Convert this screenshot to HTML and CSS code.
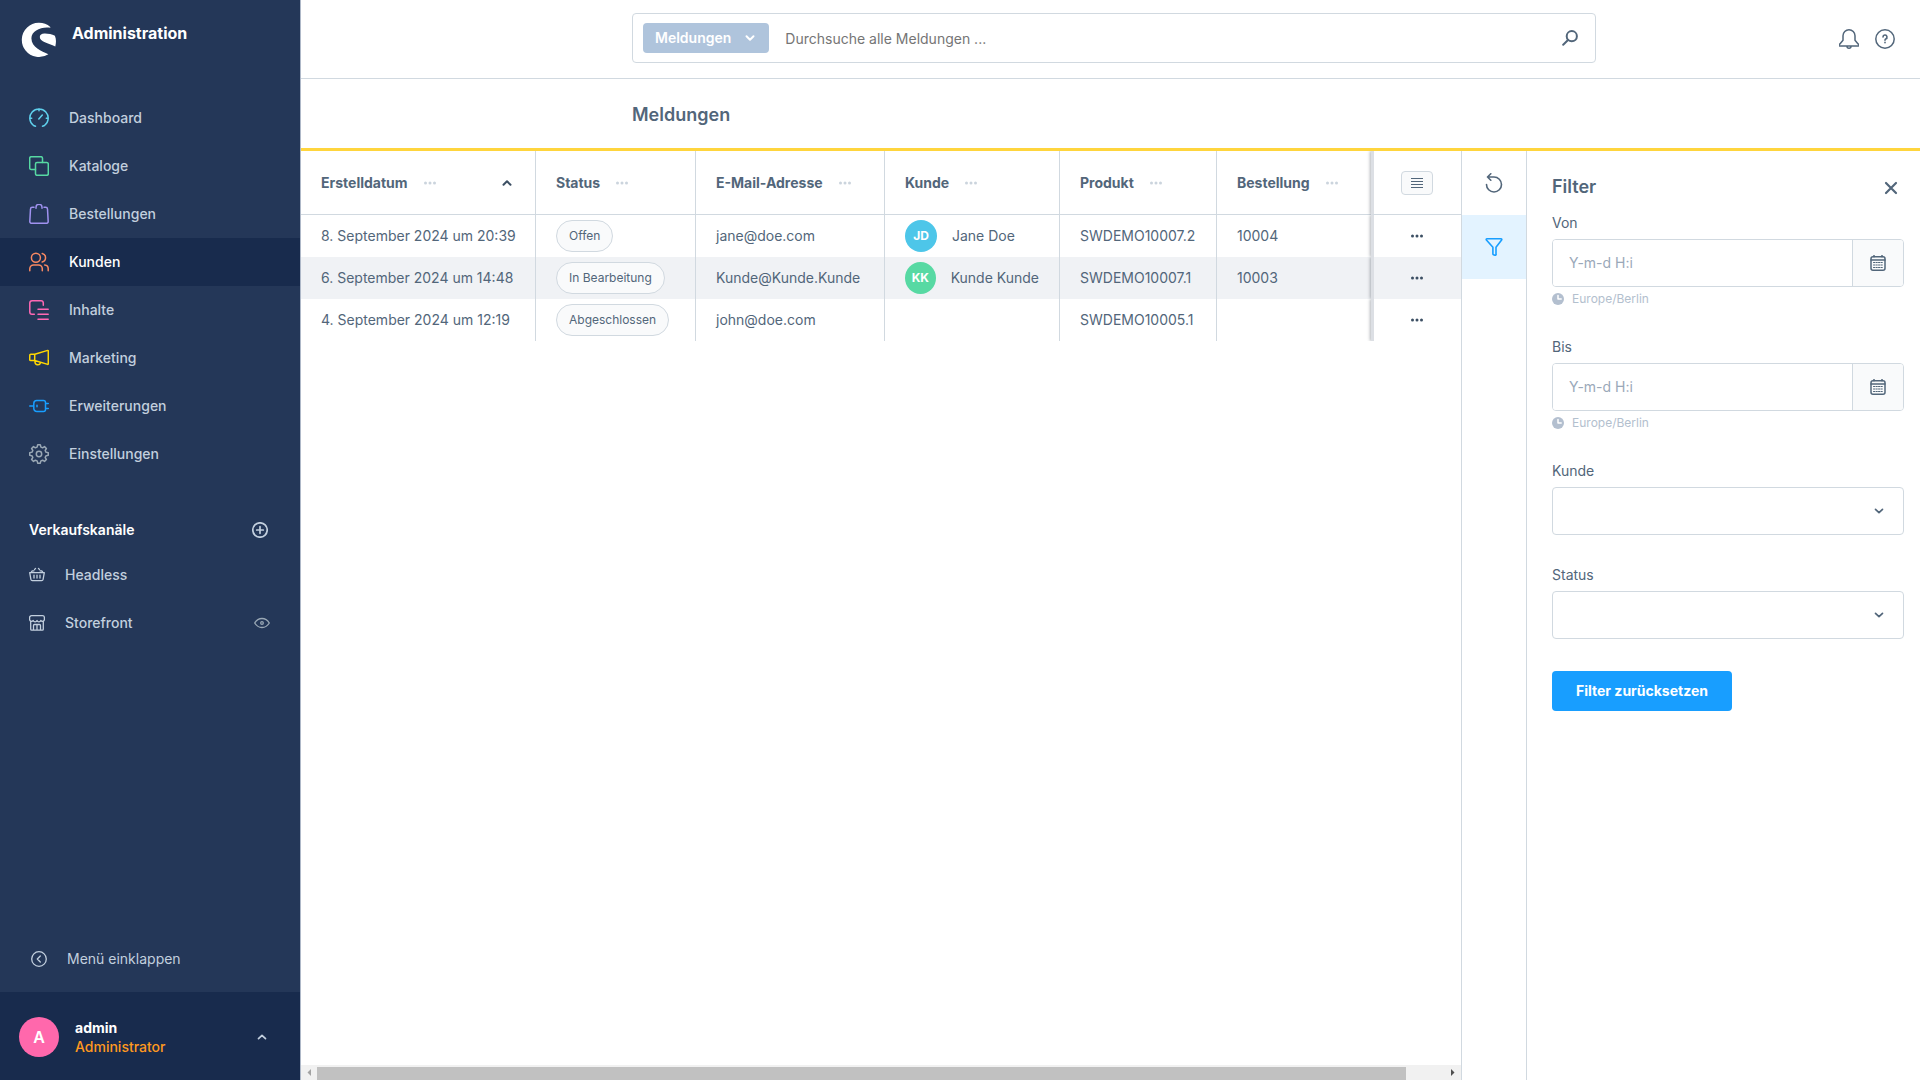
FILE: index.html
```html
<!DOCTYPE html>
<html lang="de">
<head>
<meta charset="utf-8">
<meta name="viewport" content="width=device-width, initial-scale=1">
<title>Meldungen | Administration</title>
<link rel="stylesheet" href="styles.css">
</head>
<body>
<svg class="sprite" aria-hidden="true">
  <symbol id="chevron-up" viewBox="0 0 10 10"><path d="M1.500 6.700 5 3.300l3.500 3.400"/></symbol>
  <symbol id="chevron-down" viewBox="0 0 10 10"><path d="M1.500 3.300 5 6.700l3.500-3.400"/></symbol>
  <symbol id="dots" viewBox="0 0 14 4"><circle cx="2.500" cy="2" r="1.500"/><circle cx="7" cy="2" r="1.500"/><circle cx="11.500" cy="2" r="1.500"/></symbol>
  <symbol id="calendar" viewBox="0 0 16 16"><rect x="1" y="1.700" width="14" height="13.500" rx="2"/><path d="M1 4.900h14M4 .2v1.500M12 .2v1.500"/><path d="M3.500 7.500h9M3.500 10h9M3.500 12.500h9" stroke-width="1" stroke-dasharray="1.300 1.200"/></symbol>
  <symbol id="clock" viewBox="0 0 12 12"><circle cx="6" cy="6" r="6"/><path d="M6 2.500V6h3.200" fill="none" stroke="#fff"/></symbol>
</svg>

<div class="app">
  <aside class="sidebar">
    <header class="brand">
      <svg class="brand-logo" viewBox="0 0 36 36" aria-hidden="true"><path d="M29.300 4.900A17.200 17.200 0 1 0 27.400 32.300C20.500 28.900 10.500 25.500 10.400 16.200 10.400 9.500 18 5.600 26 5.400c1.300 0 2.200.1 3.300.4ZM34.300 24.400c.9-3.800 1-7.300-.4-10.600-3-1.700-7.300-2.400-10.500-2.300-2.800.1-4.600 1.400-4.600 3.500 0 4.900 8.500 6.200 15.500 9.400Z"/></svg>
      <span class="brand-name">Administration</span>
    </header>

    <nav class="menu" aria-label="Hauptmenü">
      <a class="menu-item" href="#"><svg class="icon c-cyan" viewBox="0 0 20 20"><path d="M6.500 18.300 4.500 17.500A9.200 9.200 0 1 1 15.500 17.500l-2 .8M10 .8v2M.9 10.300h1.800M17.300 10.300h1.800M9.800 11l3.500-4"/></svg>Dashboard</a>
      <a class="menu-item" href="#"><svg class="icon c-green" viewBox="0 0 20 20"><path d="M6.500 13.500H2.200A1.500 1.500 0 0 1 .7 12V2.200A1.500 1.500 0 0 1 2.200.7H12a1.500 1.500 0 0 1 1.500 1.500v4.300"/><rect x="6.500" y="6.500" width="12.800" height="12.800" rx="1.500"/></svg>Kataloge</a>
      <a class="menu-item" href="#"><svg class="icon c-violet" viewBox="0 0 20 20"><path d="M5 3.300H3.300A1.800 1.800 0 0 0 1.500 5L.8 17.500a1.700 1.700 0 0 0 1.700 1.800h15a1.700 1.700 0 0 0 1.700-1.800L18.500 5a1.800 1.800 0 0 0-1.800-1.700H15M7 4.300V3.300a3 3 0 0 1 6 0v1"/></svg>Bestellungen</a>
      <a class="menu-item is-active" href="#" aria-current="page"><svg class="icon c-orange" viewBox="0 0 20 20"><circle cx="6.900" cy="5.800" r="4.500"/><path d="M13.200 1.400a4.500 4.500 0 0 1 0 8.700M.8 18.700v-2a3.800 3.800 0 0 1 3.800-3.800h4.900a3.800 3.800 0 0 1 3.800 3.800v2M15.700 13a3.800 3.800 0 0 1 3.500 3.800v1.900"/></svg>Kunden</a>
      <a class="menu-item" href="#"><svg class="icon c-pink" viewBox="0 0 20 20"><path d="M5.300 14.300H3A2.300 2.300 0 0 1 .8 12V3A2.300 2.300 0 0 1 3 .8h9A2.300 2.300 0 0 1 14.300 3v2.300M9 9.300h10.200M9 14.300h10.200M9 19.200h10.200"/></svg>Inhalte</a>
      <a class="menu-item" href="#"><svg class="icon c-yellow" viewBox="0 0 20 20"><path d="M.8 7.300A1 1 0 0 1 1.800 6.300h4l12.900-3.900a.5.500 0 0 1 .6.500v13a.5.500 0 0 1-.6.500L5.700 12.500h-4a1 1 0 0 1-1-1ZM5.700 6.300v6.200M6 12.600v1.600a2.800 2.800 0 0 0 5.500.5"/></svg>Marketing</a>
      <a class="menu-item" href="#"><svg class="icon c-blue" viewBox="0 0 20 20"><path d="M.7 10h4.100M4.800 7.500a3 3 0 0 1 3-3h6.700a2 2 0 0 1 2 2v7a2 2 0 0 1-2 2H7.800a3 3 0 0 1-3-3ZM16.500 7.500h2.800M16.500 12.500h2.800M8 9.300v1.400"/></svg>Erweiterungen</a>
      <a class="menu-item" href="#"><svg class="icon c-gray" viewBox="0 0 20 20"><path d="m8.600 1 .3-.3h2.200l.3.300.5 2.100 1.700.7 1.900-1.200 1.900 1.900-1.200 1.900.7 1.700 2.400.7v2.400l-2.400.7-.7 1.700 1.200 1.900-1.900 1.900-1.900-1.200-1.700.7-.7 2.400H8.800l-.7-2.400-1.700-.7-1.900 1.200-1.900-1.900 1.200-1.900-.7-1.700-2.400-.7V8.800l2.400-.7.700-1.700-1.200-1.900 1.900-1.900 1.900 1.200 1.700-.7Z"/><circle cx="10" cy="10" r="2.700"/></svg>Einstellungen</a>
    </nav>

    <section class="channels">
      <div class="channels-head">
        <h2>Verkaufskanäle</h2>
        <button type="button" aria-label="Verkaufskanal hinzufügen"><svg class="icon-sm" viewBox="0 0 16 16"><circle cx="8" cy="8" r="7.200"/><path d="M8 4.700v6.600M4.700 8h6.600"/></svg></button>
      </div>
      <a class="channel" href="#"><svg class="icon-sm thin" viewBox="0 0 16 16"><path d="M.7 5.600h14.600l-1.200 6.800a1.500 1.500 0 0 1-1.500 1.200H3.400a1.500 1.500 0 0 1-1.500-1.200ZM2 5.600l1.200-1.700h1.600M14 5.600l-1.200-1.700h-1.600M5.500 2.600l1-1.200M10.500 2.600l-1-1.200M5 8.100v3M8 8.100v3M11 8.100v3"/></svg>Headless</a>
      <a class="channel" href="#"><svg class="icon-sm thin" viewBox="0 0 16 16"><path d="M1.700 6.500v7.700a1 1 0 0 0 1 1h10.600a1 1 0 0 0 1-1V6.500M2.500.7h11a1.900 1.900 0 0 1 1.900 1.900V4.500a2 2 0 0 1-3.600 1 2 2 0 0 1-3.800 0 2 2 0 0 1-3.800 0 2 2 0 0 1-3.600-1V2.600A1.900 1.900 0 0 1 2.500.7ZM4.500 15v-4.500a1 1 0 0 1 1-1h5a1 1 0 0 1 1 1V15M8 9.500V15"/></svg><span>Storefront</span><svg class="icon-sm thin eye" viewBox="0 0 16 16"><path d="M.7 8C2.500 5 5 3.500 8 3.500S13.500 5 15.300 8C13.500 11 11 12.500 8 12.500S2.500 11 .7 8Z"/><circle cx="8" cy="8" r="1.300"/></svg></a>
    </section>

    <button class="collapse" type="button"><svg class="icon-sm thin" viewBox="0 0 16 16"><circle cx="8" cy="8" r="7.300"/><path d="M9.300 5 6.300 8l3 3"/></svg>Menü einklappen</button>

    <button class="user" type="button">
      <span class="user-avatar">A</span>
      <span class="user-text"><strong>admin</strong><span>Administrator</span></span>
      <svg class="chevron" aria-hidden="true"><use href="#chevron-up"/></svg>
    </button>
  </aside>

  <div class="page">
    <header class="topbar">
      <form class="search" role="search">
        <button class="search-type" type="button">Meldungen<svg class="chevron" aria-hidden="true"><use href="#chevron-down"/></svg></button>
        <input type="search" aria-label="Suche" placeholder="Durchsuche alle Meldungen ...">
        <button class="search-go" type="submit" aria-label="Suchen"><svg viewBox="0 0 16 16"><circle cx="9.800" cy="6.200" r="5.100"/><path d="M6 10 1.200 14.800"/></svg></button>
      </form>
      <div class="topbar-actions">
        <button type="button" aria-label="Benachrichtigungen"><svg viewBox="0 0 20 20"><path d="M10 .8a6 6 0 0 0-6 6v4.400L.9 15a1 1 0 0 0 .3 2h17.600a1 1 0 0 0 .3-2L16 11.200V6.800a6 6 0 0 0-6-6ZM8 17.500a2 1.700 0 0 0 4 0"/></svg></button>
        <button type="button" aria-label="Hilfe"><svg viewBox="0 0 20 20"><circle cx="10" cy="10" r="9.200"/><path d="M8 8a2 2 0 1 1 2.700 1.900q-.7.300-.7 1.300M10 13.300v.5" stroke-width="1.600"/></svg></button>
      </div>
    </header>

    <div class="smartbar"><h1>Meldungen</h1></div>

    <div class="content">
      <main class="listing">
        <table class="grid">
          <colgroup><col class="w-date"><col class="w-status"><col class="w-mail"><col class="w-customer"><col class="w-product"><col><col class="w-actions"></colgroup>
          <thead>
            <tr>
              <th><div class="head">Erstelldatum<svg class="dots"><use href="#dots"/></svg><svg class="chevron sort"><use href="#chevron-up"/></svg></div></th>
              <th><div class="head">Status<svg class="dots"><use href="#dots"/></svg></div></th>
              <th><div class="head">E-Mail-Adresse<svg class="dots"><use href="#dots"/></svg></div></th>
              <th><div class="head">Kunde<svg class="dots"><use href="#dots"/></svg></div></th>
              <th><div class="head">Produkt<svg class="dots"><use href="#dots"/></svg></div></th>
              <th><div class="head">Bestellung<svg class="dots"><use href="#dots"/></svg></div></th>
              <th class="actions"><button class="grid-settings" type="button" aria-label="Spalten"><svg viewBox="0 0 12 12"><path d="M0 1.500h12M0 4.500h12M0 7.500h12M0 10.500h12"/></svg></button></th>
            </tr>
          </thead>
          <tbody>
            <tr>
              <td>8. September 2024 um 20:39</td>
              <td><span class="pill">Offen</span></td>
              <td>jane@doe.com</td>
              <td><div class="customer"><span class="avatar a-blue">JD</span>Jane Doe</div></td>
              <td>SWDEMO10007.2</td>
              <td>10004</td>
              <td class="actions"><button class="row-menu" type="button" aria-label="Aktionen"><svg class="dots"><use href="#dots"/></svg></button></td>
            </tr>
            <tr>
              <td>6. September 2024 um 14:48</td>
              <td><span class="pill">In Bearbeitung</span></td>
              <td>Kunde@Kunde.Kunde</td>
              <td><div class="customer"><span class="avatar a-green">KK</span>Kunde Kunde</div></td>
              <td>SWDEMO10007.1</td>
              <td>10003</td>
              <td class="actions"><button class="row-menu" type="button" aria-label="Aktionen"><svg class="dots"><use href="#dots"/></svg></button></td>
            </tr>
            <tr>
              <td>4. September 2024 um 12:19</td>
              <td><span class="pill">Abgeschlossen</span></td>
              <td>john@doe.com</td>
              <td></td>
              <td>SWDEMO10005.1</td>
              <td></td>
              <td class="actions"><button class="row-menu" type="button" aria-label="Aktionen"><svg class="dots"><use href="#dots"/></svg></button></td>
            </tr>
          </tbody>
        </table>
        <div class="scrollbar" aria-hidden="true">
          <svg class="arrow is-off" viewBox="0 0 15 15"><path d="M9.500 4v7L6 7.500Z"/></svg>
          <div class="track"><div class="thumb"></div></div>
          <svg class="arrow" viewBox="0 0 15 15"><path d="M5.500 4v7L9 7.500Z"/></svg>
        </div>
      </main>

      <div class="tools">
        <button type="button" aria-label="Aktualisieren"><svg viewBox="0 0 18 20"><path d="M1.500 11.500A7.500 7.500 0 1 0 9 4H2.500M5.800.8 2.500 4l3.300 3.200"/></svg></button>
        <button class="is-active" type="button" aria-label="Filter"><svg viewBox="0 0 18 20"><path d="M2 1.700h14a.8.800 0 0 1 .6 1.300L11 10.200v7.200a.8.800 0 0 1-1 .8l-1.500-.5a.8.800 0 0 1-.6-.8v-6.700L1.400 3A.8.800 0 0 1 2 1.700Z"/></svg></button>
      </div>

      <section class="filter" aria-label="Filter">
        <div class="filter-head">
          <h2>Filter</h2>
          <button type="button" aria-label="Schließen"><svg viewBox="0 0 14 14"><path d="M2 2l10 10M12 2 2 12"/></svg></button>
        </div>
        <div class="fields">
          <div class="field">
            <label for="from">Von</label>
            <div class="date"><input id="from" type="text" placeholder="Y-m-d H:i"><span class="date-icon"><svg><use href="#calendar"/></svg></span></div>
            <div class="hint"><svg><use href="#clock"/></svg>Europe/Berlin</div>
          </div>
          <div class="field">
            <label for="to">Bis</label>
            <div class="date"><input id="to" type="text" placeholder="Y-m-d H:i"><span class="date-icon"><svg><use href="#calendar"/></svg></span></div>
            <div class="hint"><svg><use href="#clock"/></svg>Europe/Berlin</div>
          </div>
          <div class="field">
            <label for="customer">Kunde</label>
            <div class="select"><select id="customer"><option></option></select><svg class="chevron"><use href="#chevron-down"/></svg></div>
          </div>
          <div class="field">
            <label for="status">Status</label>
            <div class="select"><select id="status"><option></option></select><svg class="chevron"><use href="#chevron-down"/></svg></div>
          </div>
          <button class="reset" type="button">Filter zurücksetzen</button>
        </div>
      </section>
    </div>
  </div>
</div>
</body>
</html>
```
FILE: styles.css
```css
* { box-sizing: border-box; }

:root {
  --text: #52667a;
  --line: #d1d9e0;
  --nav: #243758;
  --nav-dark: #182b4d;
  --nav-text: #c2cfde;
}

body {
  margin: 0;
  font: 400 14px/20px Inter, "Liberation Sans", sans-serif;
  color: var(--text);
  background: #fff;
}

h1, h2 { margin: 0; font-weight: 600; }
button { font: inherit; color: inherit; background: none; border: 0; padding: 0; }
a { color: inherit; text-decoration: none; }
input, select { font: inherit; color: inherit; }
svg { display: block; flex: none; fill: none; stroke: currentColor; stroke-width: 1.5; stroke-linecap: round; stroke-linejoin: round; }
.sprite { position: absolute; width: 0; height: 0; }

.chevron { width: 10px; height: 10px; stroke-width: 1.7; }
.dots { width: 14px; height: 4px; fill: currentColor; stroke: none; }

.app { display: grid; grid-template-columns: 301px minmax(0, 1fr); min-height: 100vh; }

/* Sidebar */
.sidebar { display: flex; flex-direction: column; background: var(--nav); color: var(--nav-text); border-right: 1px solid #aeb8c8; font-weight: 500; }
.brand { display: flex; gap: 15px; height: 93px; padding: 22px 21px 0; }
.brand-logo { width: 36px; height: 36px; fill: #fff; stroke: none; }
.brand-name { font-size: 16px; line-height: 22px; font-weight: 700; color: #fff; }
.menu-item { display: flex; align-items: center; gap: 20px; height: 48px; padding-left: 29px; }
.menu-item.is-active { background: var(--nav-dark); color: #fff; }
.menu { padding-top: 1px; }
.icon { width: 20px; height: 20px; }
.icon-sm { width: 16px; height: 16px; stroke-width: 1.7; }
.thin { stroke-width: 1.3; }
.c-cyan { color: #5fd0ec; }
.c-green { color: #57d9a3; }
.c-violet { color: #a092f0; }
.c-orange { color: #f88962; }
.c-pink { color: #ff68b4; }
.c-yellow { color: #ffd700; }
.c-blue { color: #189eff; }
.c-gray { color: #9aa8b5; }

.channels { margin-top: 36px; }
.channels-head { display: flex; align-items: center; justify-content: space-between; height: 32px; margin-bottom: 5px; padding: 0 32px 0 29px; }
.channels-head h2 { font-size: 14px; line-height: 20px; color: #fff; }
.channel { display: flex; align-items: center; gap: 20px; height: 48px; padding: 0 30px 0 29px; }
.eye { margin-left: auto; color: #9aa8b5; }

.collapse { display: flex; align-items: center; gap: 20px; height: 66px; margin-top: auto; padding-left: 31px; font-weight: 400; }
.user { display: flex; align-items: center; gap: 16px; height: 88px; padding: 2px 33px 0 19px; background: var(--nav-dark); text-align: left; }
.user-avatar { display: grid; place-items: center; width: 40px; height: 40px; border-radius: 50%; background: #ff68ac; color: #fff; font-size: 16px; font-weight: 600; }
.user-text { display: flex; flex-direction: column; flex: 1; line-height: 19px; color: #ff991f; }
.user-text strong { color: #fff; font-weight: 700; }
.user-text span { font-weight: 500; }

/* Page head */
.page { display: flex; flex-direction: column; min-width: 0; }
.topbar { display: grid; grid-template-columns: minmax(0, 1fr) 324px; align-items: start; height: 79px; padding: 13px 0 0 331px; border-bottom: 1px solid var(--line); }
.search { display: flex; align-items: center; height: 50px; padding: 0 17px 0 10px; border: 1px solid var(--line); border-radius: 4px; }
.search-type { display: flex; align-items: center; gap: 14px; height: 30px; padding: 0 14px 0 12px; border-radius: 4px; background: #afc4dc; color: #fff; font-weight: 600; }
.search input { flex: 1; min-width: 0; height: 48px; padding: 0 16px; border: 0; background: none; outline: 0; appearance: none; }
.search input::placeholder { color: #757575; opacity: 1; }
.search-go svg { width: 16px; height: 16px; stroke-width: 2; }
.search-type .chevron { stroke-width: 2; }
.topbar-actions { display: flex; justify-content: flex-end; gap: 16px; padding: 16px 25px 0 0; }
.topbar-actions svg { width: 20px; height: 20px; }
.smartbar { display: flex; align-items: center; height: 72px; padding: 2px 0 0 331px; border-bottom: 3px solid #ffd53d; }
h1, .filter h2 { font-size: 18px; line-height: 24px; }

.content { flex: 1; display: grid; grid-template-columns: minmax(0, 1fr) 66px 393px; }

/* Data grid */
.listing { display: flex; flex-direction: column; justify-content: space-between; min-width: 0; overflow: hidden; }
.grid { width: 100%; table-layout: fixed; border-collapse: separate; border-spacing: 0; }
.w-date { width: 235px; }
.w-status { width: 160px; }
.w-mail { width: 189px; }
.w-customer { width: 175px; }
.w-product { width: 157px; }
.w-actions { width: 90px; }
.grid th { height: 64px; border-bottom: 1px solid var(--line); font-weight: 700; text-align: left; }
.grid td { height: 42px; }
.grid th, .grid td { padding: 0 20px; border-right: 1px solid var(--line); white-space: nowrap; }
.grid th:nth-child(6), .grid td:nth-child(6), .grid .actions { border-right: 0; }
.grid tbody tr:nth-child(even) td { background: #f0f2f5; }
.grid .actions { position: sticky; right: 0; padding: 0 2px 0 0; background: #fff; border-left: 3px solid #dcdfe4; box-shadow: -1px 0 3px rgba(60, 70, 80, .4); clip-path: inset(0 0 0 -6px); }
.head { display: flex; align-items: center; gap: 15px; }
.head .dots { color: #cbd4dd; }
.sort { margin-left: auto; margin-right: 3px; color: #3c4f63; stroke-width: 2; }
.grid-settings { display: grid; place-items: center; width: 32px; height: 24px; margin: 0 auto; border: 1px solid var(--line); border-radius: 4px; background: #f9fafb; }
.grid-settings svg { width: 12px; height: 12px; stroke-width: 1.2; stroke-linecap: butt; }
.row-menu { display: grid; place-items: center; width: 32px; height: 24px; margin: 0 auto; color: #3c4f63; }
.pill { display: inline-block; height: 32px; padding: 0 12px; border: 1px solid var(--line); border-radius: 16px; background: #f9fafb; font-size: 12px; line-height: 30px; vertical-align: middle; }
.customer { display: flex; align-items: center; gap: 15px; }
.avatar { display: grid; place-items: center; width: 32px; height: 32px; border-radius: 50%; color: #fff; font-size: 12px; font-weight: 700; }
.a-blue { background: #4dc6e9; }
.a-green { background: #57d9a3; }

.scrollbar { display: flex; height: 15px; background: #f1f1f1; }
.scrollbar .arrow { width: 16px; height: 15px; fill: #505050; stroke: none; }
.scrollbar .is-off { fill: #a3a3a3; }
.track { flex: 1; padding-top: 2px; }
.thumb { width: 96.5%; height: 13px; background: #c1c1c1; }

/* Tool strip and filter panel */
.tools { border: 1px solid var(--line); border-width: 0 1px; }
.tools button { display: grid; place-items: center; width: 100%; height: 64px; }
.tools .is-active { background: #e3f3ff; color: #189eff; }
.tools svg { width: 18px; height: 20px; stroke-width: 1.6; }

.filter { padding: 24px 16px 32px 25px; }
.filter-head { display: flex; align-items: center; justify-content: space-between; padding-right: 6px; margin-bottom: 16px; }
.filter-head svg { width: 14px; height: 14px; stroke-width: 2.2; }
.filter-head button { padding-top: 2px; }
.fields { display: flex; flex-direction: column; align-items: stretch; gap: 32px; }
.field label { display: block; margin-bottom: 8px; line-height: 16px; }
.date { display: flex; height: 48px; border: 1px solid var(--line); border-radius: 4px; overflow: hidden; }
.date input { flex: 1; min-width: 0; padding: 0 16px; border: 0; outline: 0; }
.date input::placeholder { color: #9aa8b9; opacity: 1; }
.date-icon { display: grid; place-items: center; width: 51px; border-left: 1px solid var(--line); background: #f9fafb; }
.date-icon svg { width: 16px; height: 16px; }
.hint { display: flex; align-items: center; gap: 8px; margin-top: 4px; font-size: 12px; line-height: 16px; color: #b3c0ce; }
.hint svg { width: 12px; height: 12px; fill: #b3bfcf; stroke: none; }
.select { display: grid; align-items: center; }
.select > * { grid-area: 1 / 1; }
.select select { width: 100%; height: 48px; padding: 0 16px; border: 1px solid var(--line); border-radius: 4px; background: #fff; appearance: none; }
.select .chevron { justify-self: end; margin-right: 20px; pointer-events: none; }
.reset { align-self: flex-start; height: 40px; padding: 0 24px; border-radius: 4px; background: #189eff; color: #fff; font-weight: 700; }
```
